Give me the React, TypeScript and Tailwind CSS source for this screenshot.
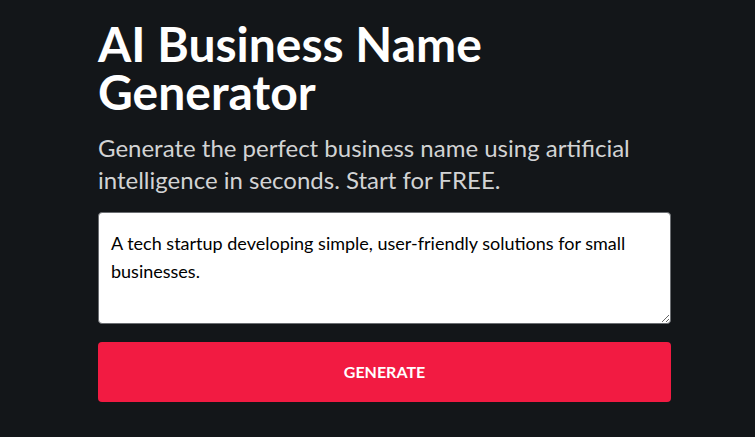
import { useEffect, useRef, useState } from "react"

export default function App() {
  const [description, setDescription] = useState(
    "A tech startup developing simple, user-friendly solutions for small businesses."
  )
  const inputRef = useRef<HTMLTextAreaElement>(null)

  useEffect(() => {
    const el = inputRef.current
    if (el) {
      el.focus()
      el.setSelectionRange(el.value.length, el.value.length)
    }
  }, [])

  return (
    <div className="min-h-screen bg-[#131619] font-['Lato','Noto_Sans',sans-serif]">
      <main className="pl-[98px] pt-5">
        <div className="w-[573px]">
          {/* Hero */}
          <h1 className="text-5xl leading-[48px] font-bold text-white">
            AI Business Name
            <br />
            Generator
          </h1>
          <p className="mt-4 text-2xl text-[#d2d3d4]">
            Generate the perfect business name using artificial intelligence in seconds. Start for FREE.
          </p>

          {/* Form */}
          <form className="mt-4 flex flex-col" onSubmit={(e) => e.preventDefault()}>
            <textarea
              ref={inputRef}
              value={description}
              onChange={(e) => setDescription(e.target.value)}
              className="h-[112px] w-full rounded border border-[#6b6e72] bg-white px-3 py-4 text-lg leading-7 text-black caret-black outline-none"
            />
            <button
              type="submit"
              className="mt-[18px] h-[60px] w-full rounded bg-[#f21b42] text-base font-bold text-white"
            >
              GENERATE
            </button>
          </form>
        </div>
      </main>
    </div>
  )
}
